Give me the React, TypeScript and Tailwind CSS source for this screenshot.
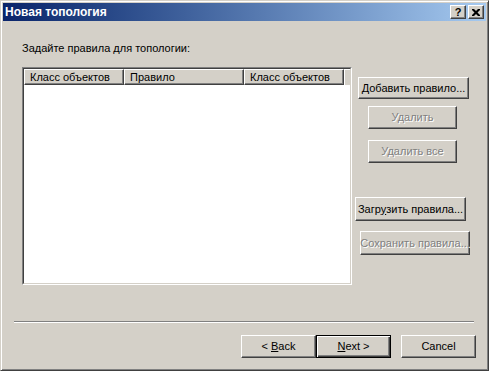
import type { ReactNode } from "react";

const font = { fontFamily: '"Liberation Sans", Arial, sans-serif' };

function WinButton({
  children,
  disabled,
  isDefault,
  className = "",
}: {
  children: ReactNode;
  disabled?: boolean;
  isDefault?: boolean;
  className?: string;
}) {
  const frame = isDefault
    ? "border border-black shadow-[inset_1px_1px_#ffffff,inset_-1px_-1px_#404040,inset_-2px_-2px_#808080]"
    : "border border-t-white border-l-white border-r-[#404040] border-b-[#404040] shadow-[inset_-1px_-1px_#808080]";
  return (
    <div
      className={`flex items-center justify-center whitespace-nowrap bg-[#d4d0c8] text-[11px] leading-none ${frame} ${
        disabled
          ? "text-[#808080] [text-shadow:1px_1px_0_#ffffff]"
          : "text-black"
      } ${className}`}
    >
      {children}
    </div>
  );
}

function HeaderCell({ label, w }: { label: string; w: string }) {
  return (
    <div
      className={`flex h-full items-center border border-t-white border-l-white border-r-[#404040] border-b-[#404040] pl-[5px] shadow-[inset_-1px_-1px_#808080] ${w}`}
    >
      {label}
    </div>
  );
}

function CaptionButton({ children }: { children: ReactNode }) {
  return (
    <div className="flex h-[14px] w-[16px] items-center justify-center border border-t-white border-l-white border-r-[#404040] border-b-[#404040] bg-[#d4d0c8] shadow-[inset_-1px_-1px_#808080]">
      {children}
    </div>
  );
}

export default function App() {
  return (
    <div
      style={font}
      className="flex h-[371px] w-[489px] flex-col border border-t-[#d4d0c8] border-l-[#d4d0c8] border-r-[#404040] border-b-[#404040] bg-[#d4d0c8] p-[2px] text-black shadow-[inset_1px_1px_#ffffff,inset_-1px_-1px_#808080]"
    >
      {/* title bar */}
      <div className="flex h-[18px] items-center justify-between bg-linear-to-r from-[#0a246a] to-[#a6caf0] pl-[2px] pr-[2px]">
        <span className="text-[12px] font-bold text-white">Новая топология</span>
        <div className="flex gap-[2px]">
          <CaptionButton>
            <span className="text-[11px] font-bold leading-none">?</span>
          </CaptionButton>
          <CaptionButton>
            <svg width="8" height="7" viewBox="0 0 8 7">
              <path
                d="M0 0h2l2 2 2-2h2v1l-2.5 2.5L8 6v1H6L4 5 2 7H0V6l2.5-2.5L0 1z"
                fill="#000"
              />
            </svg>
          </CaptionButton>
        </div>
      </div>

      {/* body */}
      <div className="flex flex-1 flex-col">
        <div className="pl-[19px] pt-[21px]">
          <p className="text-[11px] leading-[13px]">
            Задайте правила для топологии:
          </p>

          <div className="mt-[12px] flex">
            {/* list view */}
            <div className="h-[218px] w-[330px] border border-t-[#808080] border-l-[#808080] border-r-white border-b-white">
              <div className="h-full border border-t-[#404040] border-l-[#404040] border-r-[#d4d0c8] border-b-[#d4d0c8] bg-white">
                <div className="flex h-[16px] bg-[#d4d0c8] text-[11px] leading-none">
                  <HeaderCell label="Класс объектов" w="w-[100px]" />
                  <HeaderCell label="Правило" w="w-[120px]" />
                  <HeaderCell label="Класс объектов" w="w-[100px]" />
                  <div className="h-full flex-1 border-l border-t border-l-white border-t-white" />
                </div>
              </div>
            </div>

            {/* side buttons */}
            <div className="flex flex-col items-start">
              <WinButton className="ml-[6px] mt-[10px] h-[22px] w-[111px]">
                Добавить правило...
              </WinButton>
              <WinButton disabled className="ml-[16px] mt-[7px] h-[23px] w-[89px]">
                Удалить
              </WinButton>
              <WinButton disabled className="ml-[16px] mt-[11px] h-[23px] w-[89px]">
                Удалить все
              </WinButton>
              <WinButton className="ml-[3px] mt-[34px] h-[24px] w-[111px]">
                <span>
                  Загр<span className="underline">у</span>зить правила...
                </span>
              </WinButton>
              <WinButton disabled className="ml-[8px] mt-[10px] h-[24px] w-[110px]">
                Сохранить правила...
              </WinButton>
            </div>
          </div>
        </div>

        {/* separator */}
        <div className="ml-[11px] mr-[12px] mt-[36px] h-[2px] border-t border-b border-t-[#808080] border-b-white" />

        {/* wizard buttons */}
        <div className="mr-[10px] mt-[12px] flex justify-end">
          <WinButton className="h-[23px] w-[75px]">
            <span>
              &lt; <span className="underline">B</span>ack
            </span>
          </WinButton>
          <WinButton isDefault className="h-[23px] w-[75px]">
            <span>
              <span className="underline">N</span>ext &gt;
            </span>
          </WinButton>
          <WinButton className="ml-[10px] h-[23px] w-[75px]">Cancel</WinButton>
        </div>
      </div>
    </div>
  );
}
